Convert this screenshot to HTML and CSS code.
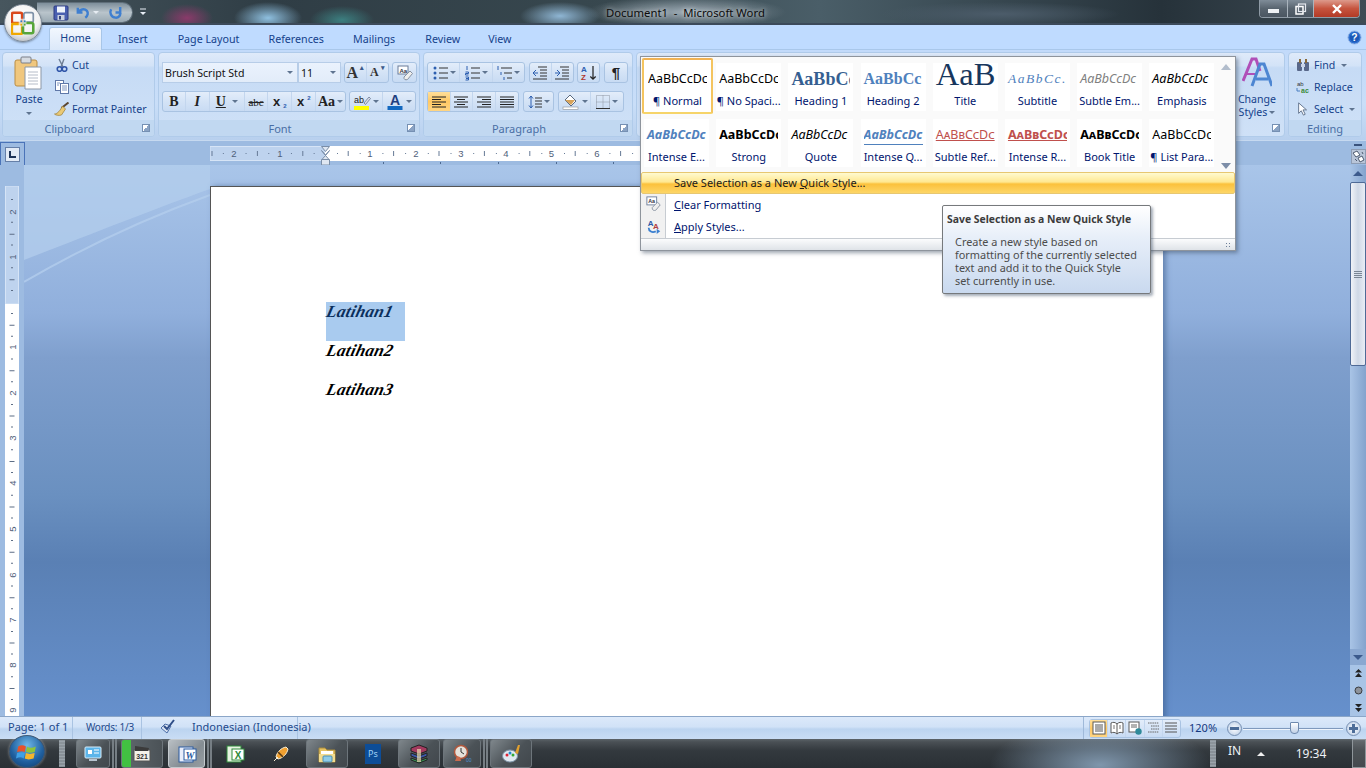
FILE: index.html
```html
<!DOCTYPE html>
<html lang="en">
<head>
<meta charset="utf-8">
<title>Document1 - Microsoft Word</title>
<link rel="stylesheet" href="styles.css">
</head>
<body>
<div class="app">
  <header class="titlebar">
    <div class="qat">
      <svg class="ic16" viewBox="0 0 16 16"><rect x="1" y="1" width="14" height="14" rx="1" fill="#4a5fb0" stroke="#2c3a80"/><rect x="4" y="1.500" width="8" height="6" fill="#eef3fb"/><rect x="4.500" y="10" width="7" height="5" fill="#c8cfdf"/><rect x="6" y="11" width="2" height="3.500" fill="#35457f"/></svg>
      <svg class="ic-undo" viewBox="0 0 16 16"><path d="M3 3v5h5M3.500 8C5 4.500 10 3.500 12.500 6c2 2.200 1.200 5.500-1.500 7.500" fill="none" stroke="#3f7fd0" stroke-width="2.600"/></svg>
      <span class="drop drop-q"></span>
      <svg class="ic-redo" viewBox="0 0 16 16"><path d="M13 2v6H8M3.300 4.500C1.500 8 3 13 8 13.500c3 .2 5-2 5.300-5" fill="none" stroke="#3f7fd0" stroke-width="2.600"/></svg>
    </div>
    <svg class="qat-more" viewBox="0 0 8 8"><path d="M1 1h6" stroke="#e8eef6"/><path d="M1 4h6L4 7z" fill="#e8eef6"/></svg>
    <div class="doc-title">Document1  -  Microsoft Word</div>
    <div class="winbtns">
      <div class="wb wb-min"><span class="min-glyph"></span></div>
      <div class="wb wb-max"><svg viewBox="0 0 12 12" width="12" height="12"><rect x="1" y="3.500" width="7" height="7.500" fill="none" stroke="#fff" stroke-width="1.500"/><rect x="3.500" y="1" width="7" height="7.500" fill="none" stroke="#e4e8ee" stroke-width="1.200"/></svg></div>
      <div class="wb wb-close"><svg viewBox="0 0 12 10" width="12" height="10"><path d="M2 1l8 8M10 1L2 9" stroke="#fff" stroke-width="2.400"/></svg></div>
    </div>
  </header>

  <nav class="tabs">
    <span class="tab tab-active">Home</span>
    <span class="tab t-insert">Insert</span>
    <span class="tab t-layout">Page Layout</span>
    <span class="tab t-refs">References</span>
    <span class="tab t-mail">Mailings</span>
    <span class="tab t-review">Review</span>
    <span class="tab t-view">View</span>
    <svg class="help" viewBox="0 0 16 16"><circle cx="8" cy="8" r="7" fill="#2d6fd0" stroke="#9ab9e6"/><circle cx="8" cy="8" r="5" fill="#1c58b6"/><text x="8" y="11.500" class="help-q">?</text></svg>
  </nav>

  <section class="ribbon">
    <div class="group g-clip">
      <div class="gbody clip-body">
        <div class="paste">
          <svg class="paste-ic" viewBox="0 0 28 34"><rect x="1" y="4" width="22" height="26" rx="2" fill="#f0c77e" stroke="#b98d45"/><rect x="7" y="1" width="10" height="6" rx="1" fill="#d6dbe2" stroke="#7a7f88"/><path d="M11 11h16v22H11z" fill="#fff" stroke="#8c97a6"/><path d="M14 16h10M14 19h10M14 22h10M14 25h10M14 28h10" stroke="#b5bcc8"/></svg>
          <span class="paste-t">Paste</span>
          <span class="drop"></span>
        </div>
        <div class="clip-list">
          <div class="clip-row"><svg class="ic14" viewBox="0 0 14 14"><path d="M4 1l4 8M9 1L6 9" stroke="#6f7f95" stroke-width="1.400" fill="none"/><circle cx="4.500" cy="11" r="2.300" fill="none" stroke="#3055a8" stroke-width="1.600"/><circle cx="9.500" cy="11" r="2.300" fill="none" stroke="#3055a8" stroke-width="1.600"/></svg><span>Cut</span></div>
          <div class="clip-row"><svg class="ic14" viewBox="0 0 14 14"><rect x=".5" y=".5" width="8" height="10" fill="#fff" stroke="#5f78a8"/><rect x="5.500" y="3.500" width="8" height="10" fill="#fff" stroke="#5f78a8"/><path d="M7 6h5M7 8h5M7 10h5M2 3h3M2 5h2" stroke="#7f96c0"/></svg><span>Copy</span></div>
          <div class="clip-row"><svg class="ic16b" viewBox="0 0 16 14"><path d="M15 .5L8 6" stroke="#5b4630" stroke-width="2"/><path d="M9 4l3 3-4 6c-3 1-6 0-7-1 3 0 6-4 8-8z" fill="#eac976" stroke="#9a7c36" stroke-width=".7"/></svg><span>Format Painter</span></div>
        </div>
      </div>
      <div class="glabel"><span>Clipboard</span><i class="launch"></i></div>
    </div>

    <div class="group g-font">
      <div class="gbody font-body">
        <div class="row">
          <div class="combo c-name"><span>Brush Script Std</span><span class="drop"></span></div>
          <div class="combo c-size"><span>11</span><span class="drop"></span></div>
          <div class="bgroup bg-grow">
            <span class="btn w22 big-a">A<sup>▴</sup></span>
            <span class="btn w22 small-a">A<sup>▾</sup></span>
          </div>
          <div class="bgroup bg-clear"><svg class="ic16" viewBox="0 0 16 16"><rect x="1" y="1" width="10" height="8" fill="#fff" stroke="#6b7c99"/><text x="2.500" y="7.500" class="mini">Aa</text><path d="M7 12l6-6 2.500 2.500-5 6c-2 .8-4 0-3.500-2.500z" fill="#eee" stroke="#8690a0"/></svg></div>
        </div>
        <div class="row row2">
          <div class="bgroup bg-format">
            <span class="btn w23 f-b">B</span>
            <span class="btn w24 f-i">I</span>
            <span class="btn w35 f-u"><u>U</u><span class="drop"></span></span>
            <span class="btn w24 f-s">abc</span>
            <span class="btn w24 f-x">x<sub>2</sub></span>
            <span class="btn w24 f-x">x<sup>2</sup></span>
            <span class="btn w29 f-aa">Aa<span class="drop"></span></span>
          </div>
          <div class="bgroup bg-color">
            <span class="btn w33"><svg class="ic18" viewBox="0 0 18 16"><rect x="1" y="12" width="15" height="4" fill="#ffff00"/><text x="1" y="9" class="ab">ab</text><path d="M11 9l5-6 1.500 1.500-5 6z" fill="#d8dde8" stroke="#687690" stroke-width=".8"/></svg><span class="drop"></span></span>
            <span class="btn w33"><svg class="ic18" viewBox="0 0 18 16"><text x="9" y="11" class="colA">A</text><rect x="1.500" y="12" width="15" height="4" fill="#1268c0"/></svg><span class="drop"></span></span>
          </div>
        </div>
      </div>
      <div class="glabel"><span>Font</span><i class="launch"></i></div>
    </div>

    <div class="group g-para">
      <div class="gbody para-body">
        <div class="row">
          <div class="bgroup bg-lists">
            <span class="btn w33"><svg class="ic16" viewBox="0 0 16 16"><path d="M7 3h9M7 8h9M7 13h9" stroke="#333"/><circle cx="3" cy="3" r="1.500" fill="#2d5fb0"/><circle cx="3" cy="8" r="1.500" fill="#2d5fb0"/><circle cx="3" cy="13" r="1.500" fill="#2d5fb0"/></svg><span class="drop"></span></span>
            <span class="btn w33"><svg class="ic16" viewBox="0 0 16 16"><path d="M7 3h9M7 8h9M7 13h9" stroke="#333"/><path d="M3 1v4M1.500 7h3v1.500h-3V10h3M1.500 12h3v3h-3M2 13.500h2" stroke="#2d5fb0" fill="none"/></svg><span class="drop"></span></span>
            <span class="btn w32"><svg class="ic16" viewBox="0 0 16 16"><path d="M5 3h11M8 8h8M11 13h5" stroke="#333"/><path d="M2 1v4M5 7v3M8 12v3" stroke="#2d5fb0"/></svg><span class="drop"></span></span>
          </div>
          <div class="bgroup bg-ind">
            <span class="btn w22"><svg class="ic14" viewBox="0 0 14 14"><path d="M5 1h9M7 4h7M7 7h7M7 10h7M0 13h14" stroke="#333"/><path d="M5 7H0l3-3M0 7l3 3" stroke="#2d5fb0" fill="none"/></svg></span>
            <span class="btn w22"><svg class="ic14" viewBox="0 0 14 14"><path d="M5 1h9M7 4h7M7 7h7M7 10h7M0 13h14" stroke="#333"/><path d="M0 7h5L2 4M5 7l-3 3" stroke="#2d5fb0" fill="none"/></svg></span>
          </div>
          <div class="bgroup bg-sort"><svg class="ic18" viewBox="0 0 18 18"><text x="0" y="8" class="az-a">A</text><text x="0" y="17" class="az-z">Z</text><path d="M13.500 1v15M10.500 13l3 3 3-3" stroke="#222" stroke-width="1.400" fill="none"/></svg></div>
          <div class="bgroup bg-pil"><span class="pil">¶</span></div>
        </div>
        <div class="row row2">
          <div class="bgroup bg-align">
            <span class="btn w23 on"><svg class="ic14" viewBox="0 0 14 12"><path d="M0 1h14M0 3.500h9M0 6h14M0 8.500h9M0 11h14" stroke="#222"/></svg></span>
            <span class="btn w23"><svg class="ic14" viewBox="0 0 14 12"><path d="M0 1h14M3 3.500h8M0 6h14M3 8.500h8M0 11h14" stroke="#222"/></svg></span>
            <span class="btn w23"><svg class="ic14" viewBox="0 0 14 12"><path d="M0 1h14M5 3.500h9M0 6h14M5 8.500h9M0 11h14" stroke="#222"/></svg></span>
            <span class="btn w23"><svg class="ic14" viewBox="0 0 14 12"><path d="M0 1h14M0 3.500h14M0 6h14M0 8.500h14M0 11h14" stroke="#222"/></svg></span>
          </div>
          <div class="bgroup bg-space"><svg class="ic14" viewBox="0 0 14 14"><path d="M3 1v12M1 3.500L3 1l2 2.500M1 10.500L3 13l2-2.500" stroke="#2d5fb0" fill="none"/><path d="M7 3h7M7 6h7M7 9h7M7 12h7" stroke="#333"/></svg><span class="drop"></span></div>
          <div class="bgroup bg-shade">
            <span class="btn w33"><svg class="ic18" viewBox="0 0 18 16"><path d="M8 1l6 6-5 5-6-6z" fill="#fff" stroke="#5a6a80"/><path d="M3 6h10l-4 5z" fill="#d7a35a"/><rect x="1" y="13" width="15" height="2.500" fill="#fff" stroke="#8b8f95" stroke-width=".6"/></svg><span class="drop"></span></span>
            <span class="btn w33"><svg class="ic14" viewBox="0 0 14 14"><path d="M.5.500h13v13H.5zM7 .5v13M.5 7h13" fill="none" stroke="#8c95a3" stroke-dasharray="1 1"/><path d="M0 13.500h14" stroke="#333"/></svg><span class="drop"></span></span>
          </div>
        </div>
      </div>
      <div class="glabel"><span>Paragraph</span><i class="launch"></i></div>
    </div>

    <div class="group g-styles">
      <div class="gbody styles-body">
        <div class="change">
          <svg class="change-ic" viewBox="0 0 30 30"><path d="M1 24L10 2h4l4 12" fill="none" stroke="#b04fb8" stroke-width="3"/><path d="M5 17h9" stroke="#b04fb8" stroke-width="2"/><path d="M10 29L18 7h4l8 22M14 22h12" fill="none" stroke="#4d86d2" stroke-width="3"/></svg>
          <span>Change</span>
          <span class="ch2">Styles<span class="drop"></span></span>
        </div>
      </div>
      <div class="glabel glabel-r"><i class="launch"></i></div>
    </div>

    <div class="group g-edit">
      <div class="gbody clip-list edit-body">
        <div class="clip-row"><svg class="ic14" viewBox="0 0 14 14"><rect x="1" y="4" width="5" height="9" rx="1" fill="#59688a"/><rect x="8" y="4" width="5" height="9" rx="1" fill="#59688a"/><rect x="3" y="1" width="2" height="4" fill="#8a6a3a"/><rect x="9" y="1" width="2" height="4" fill="#8a6a3a"/><rect x="5" y="6" width="4" height="3" fill="#c9d3e6"/></svg><span>Find</span><span class="drop"></span></div>
        <div class="clip-row"><svg class="ic14" viewBox="0 0 14 14"><text x="1" y="6" class="mini2">ab</text><text x="5" y="13" class="mini3">ac</text><path d="M1 8v3h3" stroke="#4b7fc0" fill="none"/></svg><span>Replace</span></div>
        <div class="clip-row"><svg class="ic14" viewBox="0 0 14 16"><path d="M2 1v12l3-3 2.500 5 2-1-2.500-5h4z" fill="#fff" stroke="#596a85"/></svg><span>Select</span><span class="drop"></span></div>
      </div>
      <div class="glabel"><span>Editing</span></div>
    </div>
  </section>

  <div class="rulerbar">
    <div class="tabsel"><div class="tabsel-in"><svg viewBox="0 0 9 9" width="9" height="9"><path d="M2 1v6h6" fill="none" stroke="#1e3458" stroke-width="2"/></svg></div></div>
    <svg class="hruler" viewBox="0 0 450 19" width="450" height="19">
      <rect x="0" y=".5" width="115" height="14" fill="#bed3ee" stroke="#d6e4f6"/>
      <rect x="115" y="0" width="335" height="15" fill="#fff"/>
      <line x1="12.850" y1="7.500" x2="115" y2="7.500" stroke="#667a96" stroke-dasharray="1 21.700"/>
      <line x1="127" y1="7.500" x2="450" y2="7.500" stroke="#667a96" stroke-dasharray="1 21.700"/>
      <line x1="137.700" y1="7.500" x2="450" y2="7.500" stroke="#667a96" stroke-width="5" stroke-dasharray="1 44.400"/>
      <line x1="1.500" y1="7.500" x2="115" y2="7.500" stroke="#667a96" stroke-width="5" stroke-dasharray="1 44.400"/>
      <text x="24" y="11" class="rn">2</text><text x="70" y="11" class="rn">1</text>
      <text x="160" y="11" class="rn">1</text><text x="206" y="11" class="rn">2</text><text x="251" y="11" class="rn">3</text><text x="296" y="11" class="rn">4</text><text x="341.500" y="11" class="rn">5</text><text x="387" y="11" class="rn">6</text>
      <path d="M173.500 16v2M230.500 16v2M288.500 16v2M346.500 16v2M403.500 16v2" stroke="#4d6a92"/>
      <path d="M111.500 4.500l4 4.500 4-4.500v0l-4 5 4 4.500v5h-8v-5l4-4.500z" fill="#dfe7f2" stroke="#7a8ea8"/>
      <path d="M111.500 .5h8l-4 5z" fill="#dfe7f2" stroke="#7a8ea8"/>
      <path d="M111.500 13.500h8" stroke="#7a8ea8"/>
    </svg>
    <div class="split">
      <span class="split-dash"></span>
      <span class="split-ic"><svg viewBox="0 0 13 13" width="13" height="13"><path d="M1 3l4-2 3 4-4 2zM6 8l4-2 2 4-4 2z" fill="#fff" stroke="#4e5b70"/><path d="M3 9l2 2M10 2l1 2" stroke="#4e5b70"/></svg></span>
    </div>
  </div>

  <main class="workspace">
    <div class="vpanel">
      <svg class="vruler" viewBox="0 0 14 530" width="14" height="530">
        <rect x=".5" y="0" width="13" height="118" fill="#bed3ee" stroke="#d6e4f6"/>
        <rect x="0" y="118" width="14" height="412" fill="#fff"/>
        <line x1="7" y1="13.100" x2="7" y2="118" stroke="#5d6e86" stroke-width="2" stroke-dasharray="1 21.700"/>
        <line x1="7" y1="127.100" x2="7" y2="530" stroke="#5d6e86" stroke-width="2" stroke-dasharray="1 21.700"/>
        <line x1="7" y1="47.800" x2="7" y2="118" stroke="#5d6e86" stroke-width="5" stroke-dasharray="1 44.400"/>
        <line x1="7" y1="138.800" x2="7" y2="530" stroke="#5d6e86" stroke-width="5" stroke-dasharray="1 44.400"/>
        <g class="vnums">
          <text transform="translate(11 26) rotate(-90)" class="rn">2</text>
          <text transform="translate(11 71) rotate(-90)" class="rn">1</text>
          <text transform="translate(11 161) rotate(-90)" class="rn">1</text>
          <text transform="translate(11 207) rotate(-90)" class="rn">2</text>
          <text transform="translate(11 252) rotate(-90)" class="rn">3</text>
          <text transform="translate(11 297) rotate(-90)" class="rn">4</text>
          <text transform="translate(11 343) rotate(-90)" class="rn">5</text>
          <text transform="translate(11 389) rotate(-90)" class="rn">6</text>
          <text transform="translate(11 434) rotate(-90)" class="rn">7</text>
          <text transform="translate(11 479) rotate(-90)" class="rn">8</text>
          <text transform="translate(11 524) rotate(-90)" class="rn">9</text>
        </g>
      </svg>
    </div>
    <div class="docarea">
      <svg class="swoosh" viewBox="0 0 1326 551" preserveAspectRatio="none"><path d="M0 95C60 72 130 44 186 24L186 0H1326V0H0z" fill="#b3cdec" opacity=".75"/><path d="M0 117C60 82 125 52 186 30" fill="none" stroke="#b3cdec" stroke-width="2" opacity=".8"/></svg>
      <div class="page">
        <p class="line sel"><span>Latihan1</span></p>
        <p class="line"><span>Latihan2</span></p>
        <p class="line"><span>Latihan3</span></p>
      </div>
    </div>
    <div class="vscroll">
      <div class="sb-top"><span class="sb-up"></span></div>
      <div class="sb-thumb"><span class="sb-grip"></span></div>
      <div class="sb-track"></div>
      <div class="sb-btn"><span class="sb-down"></span></div>
      <div class="sb-nav">
        <svg viewBox="0 0 9 9" width="9" height="9"><path d="M4.500 0L8 3.500H1zM4.500 4L8 8H1z" fill="#222"/></svg>
        <svg viewBox="0 0 9 9" width="9" height="9"><circle cx="4.500" cy="4.500" r="3.500" fill="#8e939b" stroke="#222" stroke-width=".8"/></svg>
        <svg viewBox="0 0 9 9" width="9" height="9"><path d="M1 1h7L4.500 4.500zM1 5h7L4.500 9z" fill="#222"/></svg>
      </div>
    </div>
  </main>

  <footer class="status">
    <span class="st st-page">Page: 1 of 1</span>
    <span class="st st-words">Words: 1/3</span>
    <span class="st st-lang"><svg class="ic-check" viewBox="0 0 18 16"><path d="M2 9l4-4 6 2-4 7z" fill="#dbe5f3" stroke="#4d6fa8"/><path d="M5 7l3 3 7-9" fill="none" stroke="#2f4e88" stroke-width="2"/></svg><span>Indonesian (Indonesia)</span></span>
    <span class="st-spring"></span>
    <div class="views">
      <span class="vbtn on"><svg class="ic14" viewBox="0 0 14 14"><rect x="1" y="1" width="12" height="12" fill="#fff" stroke="#5a5a5a"/><path d="M3 4h8M3 6h8M3 8h8M3 10h8" stroke="#555"/></svg></span>
      <span class="vbtn"><svg class="ic14" viewBox="0 0 14 14"><path d="M7 3C5 1 3 1 1 2v10c2-1 4-1 6 1 2-2 4-2 6-1V2c-2-1-4-1-6 1zM7 3v10" fill="#fff" stroke="#5a5a5a"/><path d="M3 5h2M3 7h2M9 5h2M9 7h2" stroke="#777"/></svg></span>
      <span class="vbtn"><svg class="ic14" viewBox="0 0 14 14"><rect x="1" y="1" width="10" height="10" fill="#fff" stroke="#5a5a5a"/><path d="M3 4h6M3 6h6" stroke="#666"/><circle cx="10.500" cy="10.500" r="3.200" fill="#2f8a9a"/></svg></span>
      <span class="vbtn"><svg class="ic14" viewBox="0 0 14 14"><path d="M2 2h11M5 5h8M5 8h8M2 11h11" stroke="#666" stroke-dasharray="1.500 .7"/></svg></span>
      <span class="vbtn"><svg class="ic14" viewBox="0 0 14 14"><path d="M1 2h12M1 5h12M1 8h12M1 11h12" stroke="#555"/></svg></span>
    </div>
    <span class="zoompct">120%</span>
    <span class="zbtn"><i class="zminus"></i></span>
    <div class="zslider"><span class="zthumb"></span></div>
    <span class="zbtn"><i class="zminus"></i><i class="zplus"></i></span>
  </footer>

  <div class="taskbar">
    <span class="grip g-start"></span>
    <div class="tb tb-f w34"><svg class="tic" viewBox="0 0 20 20"><rect x="2" y="3" width="16" height="11" rx="1" fill="#5cb5ea" stroke="#d8ecf8"/><rect x="5" y="6" width="4" height="4" fill="#fff"/><path d="M11 6h5M11 9h5" stroke="#fff"/><rect x="6" y="15" width="8" height="2" fill="#b8c4d0"/></svg></div>
    <span class="tb-sep"></span>
    <div class="tb tb-f w42 prog"><svg class="tic" viewBox="0 0 20 20"><rect x="2" y="6" width="16" height="11" fill="#f4f2ea" stroke="#555"/><path d="M3 2l14 2-1 3H3z" fill="#3b3b3b"/><text x="10" y="15" class="num321">321</text></svg></div>
    <div class="tb tb-a w37"><svg class="tic" viewBox="0 0 20 20"><rect x="2" y="3" width="14" height="15" fill="#e9eefb" stroke="#2a5a9f"/><rect x="7" y="5" width="12" height="11" fill="#fff" stroke="#2a5a9f"/><text x="13" y="14.500" class="w-let">W</text></svg></div>
    <span class="tb-sep"></span>
    <div class="tb tb-p w30 m-excel"><svg class="tic" viewBox="0 0 20 20"><rect x="2" y="2" width="14" height="16" fill="#e7f3e2" stroke="#2f8a3a"/><rect x="7" y="5" width="12" height="11" fill="#fff" stroke="#2f8a3a"/><text x="13" y="14.500" class="x-let">X</text></svg></div>
    <div class="tb tb-p w30 m-rock"><svg class="tic" viewBox="0 0 20 20"><path d="M3 17l4-4M15 3c-5 1-9 5-10 10l2 2c5-1 9-5 10-10z" fill="#f0a030" stroke="#f7f0d8"/><path d="M7 8l5 5" stroke="#5b3a10" stroke-width="1.600"/></svg></div>
    <div class="tb tb-f w42 m-fold"><svg class="tic" viewBox="0 0 20 20"><path d="M2 4h6l2 2h8v12H2z" fill="#e6c262" stroke="#a88a3a"/><rect x="4" y="7" width="12" height="4" fill="#fff"/><path d="M2 10h16v8H2z" fill="#f3dc8f"/><rect x="6" y="12" width="9" height="6" rx="1" fill="#8ecbe8" stroke="#4d8fb0"/></svg></div>
    <div class="tb tb-p w30 m-ps"><div class="ps">Ps</div></div>
    <div class="tb tb-f w42 m-rar"><svg class="tic" viewBox="0 0 20 20"><path d="M2 4l8-3 8 3v3l-8 3-8-3z" fill="#a33a5f" stroke="#222"/><path d="M2 9l8 3 8-3v3l-8 3-8-3z" fill="#3d58a8" stroke="#222"/><path d="M2 14l8 3 8-3v2l-8 3-8-3z" fill="#3a9a57" stroke="#222"/><rect x="8" y="5" width="4" height="13" fill="#e8dcb0" opacity=".7"/></svg></div>
    <div class="tb tb-f w38"><svg class="tic" viewBox="0 0 20 20"><circle cx="9" cy="8" r="6.500" fill="#e5e1da" stroke="#b0573c" stroke-width="1.500"/><path d="M9 4v4l3 2" stroke="#333" fill="none"/><path d="M5 12l-2 5h6l-1-4z" fill="#c96a4d"/><text x="14" y="18" class="tb-blue">00</text></svg></div>
    <span class="tb-sep s3"></span>
    <div class="tb tb-f w42"><svg class="tic" viewBox="0 0 20 20"><ellipse cx="9" cy="12" rx="7.500" ry="6" fill="#dfe8f0" stroke="#7f95a8"/><circle cx="6" cy="11" r="1.500" fill="#d23"/><circle cx="9" cy="9" r="1.500" fill="#28c"/><circle cx="12" cy="11" r="1.500" fill="#3a3"/><path d="M14 9l3-8h2l-2 9z" fill="#e0a030"/></svg></div>
    <span class="tb-spring"></span>
    <span class="grip g-tray"></span>
    <span class="lang">IN</span>
    <span class="tray-up"></span>
    <span class="clock">19:34</span>
    <span class="showdesk"></span>
  </div>
</div>

<div class="orb">
  <svg viewBox="0 0 28 28" class="orb-logo"><rect x="1" y="2" width="12" height="12" rx="2" fill="none" stroke="#d9481c" stroke-width="3"/><rect x="15" y="2" width="11" height="11" rx="2" fill="none" stroke="#7f92a8" stroke-width="2"/><rect x="1" y="15" width="12" height="12" rx="2" fill="none" stroke="#f0a800" stroke-width="3"/><rect x="14" y="14" width="12" height="12" rx="2" fill="none" stroke="#57a63a" stroke-width="3"/><rect x="9" y="9" width="9" height="9" fill="#f4f4f4" opacity=".7"/><rect x="11" y="11" width="2" height="2" fill="#2d7fc0"/><rect x="15" y="11" width="2" height="2" fill="#2d7fc0"/><rect x="11" y="15" width="2" height="2" fill="#f0a800"/><rect x="15" y="15" width="2" height="2" fill="#57a63a"/></svg>
</div>

<div class="gallery">
  <div class="g-top">
    <div class="g-grid">
      <div class="st-cell cur"><div class="samp s-n">AaBbCcDc</div><div class="cap">¶ Normal</div></div>
      <div class="st-cell"><div class="samp s-n">AaBbCcDc</div><div class="cap">¶ No Spaci...</div></div>
      <div class="st-cell"><div class="samp s-h1">AaBbCc</div><div class="cap">Heading 1</div></div>
      <div class="st-cell"><div class="samp s-h2">AaBbCc</div><div class="cap">Heading 2</div></div>
      <div class="st-cell"><div class="samp s-title">AaB</div><div class="cap">Title</div></div>
      <div class="st-cell"><div class="samp s-sub">AaBbCc.</div><div class="cap">Subtitle</div></div>
      <div class="st-cell"><div class="samp s-se">AaBbCcDc</div><div class="cap">Subtle Em...</div></div>
      <div class="st-cell"><div class="samp s-em">AaBbCcDc</div><div class="cap">Emphasis</div></div>
      <div class="st-cell"><div class="samp s-ie">AaBbCcDc</div><div class="cap">Intense E...</div></div>
      <div class="st-cell"><div class="samp s-strong">AaBbCcDc</div><div class="cap">Strong</div></div>
      <div class="st-cell"><div class="samp s-em">AaBbCcDc</div><div class="cap">Quote</div></div>
      <div class="st-cell"><div class="samp s-iq">AaBbCcDc</div><div class="cap">Intense Q...</div></div>
      <div class="st-cell"><div class="samp s-sr">AaBbCcDc</div><div class="cap">Subtle Ref...</div></div>
      <div class="st-cell"><div class="samp s-ir">AaBbCcDc</div><div class="cap">Intense R...</div></div>
      <div class="st-cell"><div class="samp s-bt">AaBbCcDc</div><div class="cap">Book Title</div></div>
      <div class="st-cell"><div class="samp s-n">AaBbCcDc</div><div class="cap">¶ List Para...</div></div>
    </div>
    <div class="g-scroll"><span class="g-up"></span><span class="g-down"></span></div>
  </div>
  <div class="g-save">Save Selection as a New <u>Q</u>uick Style...</div>
  <div class="g-items">
    <div class="g-item"><span class="g-ic"><svg class="ic18" viewBox="0 0 18 18"><rect x="1" y="1" width="11" height="9" fill="#fff" stroke="#6b7c99"/><text x="2.500" y="8" class="mini">Aa</text><path d="M7 13l6-6 3 3-5 6c-2 .8-4.500 0-4-3z" fill="#eee" stroke="#8690a0"/></svg></span><span class="g-t"><u>C</u>lear Formatting</span></div>
    <div class="g-item"><span class="g-ic"><svg class="ic18" viewBox="0 0 18 18"><text x="2" y="9" class="ap-a">A</text><text x="8" y="12" class="ap-b">A</text><path d="M3 11c0 4 4 6 8 4" fill="none" stroke="#3a7fd0" stroke-width="2"/><path d="M12 12l4 3-4 3z" fill="#3a7fd0"/></svg></span><span class="g-t"><u>A</u>pply Styles...</span></div>
  </div>
  <div class="g-foot"><span class="g-grip"></span></div>
</div>

<aside class="tooltip">
  <div class="tt-h">Save Selection as a New Quick Style</div>
  <p class="tt-b">Create a new style based on<br>formatting of the currently selected<br>text and add it to the Quick Style<br>set currently in use.</p>
</aside>

<div class="startorb"><svg viewBox="0 0 20 20" width="22" height="22"><path d="M2 5c2-1.500 5-1.500 7 0l-1 5C6 9 4 9 1 10z" fill="#e8512a"/><path d="M10 5c2 1.500 5 1.500 8 0l-1 5c-3 1-5 1-8 0z" fill="#8fc43a"/><path d="M1 11c3-1 5-1 7 0l-1 5c-2-1.500-4-1.500-7 0z" fill="#3fa0e6"/><path d="M9 11c2 1 5 1 8 0l-1 5c-3 1-6 1-8 0z" fill="#f6b62c"/></svg></div>
</body>
</html>
```

FILE: styles.css
```css
* { box-sizing: border-box; }
html, body { margin: 0; padding: 0; width: 1366px; height: 768px; overflow: hidden; }
body { position: relative; font: 11px "Noto Sans", sans-serif; color: #15428b; background: #9ebbe0; }
svg { display: block; flex: none; }
p { margin: 0; }

.app { display: flex; flex-direction: column; width: 1366px; height: 768px; }

/* title bar */
.titlebar {
  height: 25px; display: flex; align-items: flex-start; flex: none;
  border-bottom: 2px solid #3c4a5a;
  background:
    radial-gradient(ellipse 26px 14px at 187px 18px, #8a3a6a 0, #8a3a6a00 100%),
    radial-gradient(ellipse 34px 16px at 268px 18px, #8fc0e0 0, #8fc0e000 100%),
    radial-gradient(ellipse 32px 14px at 342px 20px, #3c7f80 0, #3c7f8000 100%),
    radial-gradient(ellipse 40px 14px at 560px 16px, #8fb6d4 0, #8fb6d400 100%),
    radial-gradient(ellipse 100px 16px at 686px 12px, #9aa8b2 0, #9aa8b200 100%),
    radial-gradient(ellipse 120px 12px at 1000px 14px, #4c5c6a 0, #4c5c6a00 100%),
    linear-gradient(90deg, #47565e 0, #2f3d45 20%, #38484f 45%, #4a5e68 60%, #26323a 85%, #3f4c55 100%);
}
.qat {
  margin: 2px 0 0 37px; width: 96px; height: 21px; display: flex; align-items: center; padding-left: 16px;
  background: linear-gradient(#7d8e9a, #b9c4cb 50%, #9aa9b3);
  border: 1px solid #5f6e79; border-radius: 0 11px 11px 0; border-left: 0;
}
.ic16 { width: 16px; height: 16px; }
.ic14 { width: 14px; height: 14px; }
.ic18 { width: 18px; height: 16px; }
.ic16b { width: 17px; height: 14px; }
.ic-undo { width: 15px; height: 15px; margin-left: 6px; }
.ic-redo { width: 15px; height: 15px; margin-left: 9px; }
.qat-more { width: 8px; height: 8px; margin: 8px 0 0 6px; }
.doc-title { margin: 5px 0 0 459px; width: 160px; font-size: 11.3px; line-height: 15px; white-space: pre; color: #0c0c0c; text-shadow: 0 0 4px #ffffffa0, 0 0 8px #ffffff70; }
.winbtns { display: flex; margin-left: 493px; height: 18px; border: 1px solid #8f9ba6; border-top: 0; border-radius: 0 0 4px 4px; overflow: hidden; }
.wb { display: flex; align-items: center; justify-content: center; background: linear-gradient(#7f8c98, #58646f 50%, #4b5661); }
.wb-min { width: 27px; }
.wb-max { width: 27px; border-left: 1px solid #aab4bd; border-right: 1px solid #aab4bd; }
.wb-close { width: 45px; background: linear-gradient(#dd9a8c, #c6543e 50%, #b33a26); }
.min-glyph { width: 11px; height: 4px; background: #eef1f4; margin-top: 4px; }

/* tabs */
.tabs { height: 24px; flex: none; display: flex; align-items: flex-end; background: #bfdbff; position: relative; }
.tab { font-size: 10.7px; line-height: 16px; padding-bottom: 2px; }
.tab-active { margin-left: 49px; width: 53px; height: 23px; display: flex; align-items: center; justify-content: center; padding: 0 0 2px; background: linear-gradient(#f2f7fe, #dbe8f9); border: 1px solid #a8c6e8; border-bottom: 0; border-radius: 3px 3px 0 0; margin-bottom: -1px; position: relative; z-index: 1; }
.t-insert { margin-left: 16px; }
.t-layout { margin-left: 30px; }
.t-refs { margin-left: 29px; }
.t-mail { margin-left: 29px; }
.t-review { margin-left: 30px; }
.t-view { margin-left: 28px; }
.help { width: 15px; height: 15px; position: absolute; right: 4px; top: 5px; }
.help-q { font: bold 11px "Liberation Sans", sans-serif; fill: #fff; text-anchor: middle; }

/* ribbon */
.ribbon { height: 91px; flex: none; display: flex; gap: 3px; padding: 2px 4px 3px 2px; background: linear-gradient(#c2dafa, #c9def8 60%, #b8d0ee); border-top: 1px solid #a9c7ea; font-size: 10.6px; }
.group { display: flex; flex-direction: column; height: 85px; border: 1px solid #b0cbea; border-radius: 4px; overflow: hidden; background: linear-gradient(#dfeafa, #d3e3f7 15%, #c6dbf5 18%, #cfe1f7 100%); }
.g-clip { width: 153px; }
.g-font { width: 262px; }
.g-para { width: 210px; }
.g-styles { width: 649px; }
.g-edit { width: 74px; }
.gbody { flex: 1; min-height: 0; }
.glabel { height: 16px; flex: none; display: flex; align-items: center; justify-content: center; position: relative; padding-right: 18px; background: #c1d8f1; color: #4a6fa5; font-size: 11px; }
.g-edit .glabel { padding-right: 0; }
.launch { position: absolute; right: 4px; top: 4px; width: 8px; height: 8px; border: 1px solid #7590b3; background: linear-gradient(135deg, #fff 50%, #8aa3c4 50%); }
.drop { display: inline-block; width: 0; height: 0; border: 3px solid transparent; border-top: 3px solid #5f7490; border-bottom: 0; flex: none; }
.drop-q { margin-left: 3px; border-top-color: #e6ecf2; }

.clip-body { display: flex; }
.paste { width: 52px; display: flex; flex-direction: column; align-items: center; padding-top: 3px; }
.paste-ic { width: 28px; height: 34px; margin-left: -2px; }
.paste-t { margin-top: 1px; line-height: 16px; }
.paste .drop { margin-top: 5px; }
.clip-list { display: flex; flex-direction: column; padding-top: 1px; }
.clip-row { height: 22px; display: flex; align-items: center; gap: 3px; white-space: nowrap; }
.clip-row .drop { margin-left: 2px; }
.clip-list .clip-row:nth-child(3) .ic16b { margin-left: -2px; margin-right: -1px; }

.row { display: flex; align-items: flex-start; gap: 3px; }
.row2 { margin-top: 8px; }
.font-body { padding: 9px 0 0 3px; }
.para-body { padding: 9px 0 0 3px; }
.combo { height: 21px; display: flex; align-items: center; justify-content: space-between; padding: 0 4px 0 2px; background: linear-gradient(#eaf2fd, #e2ecf9); border: 1px solid #b7cde8; color: #111; }
.c-name { width: 136px; margin-right: -3px; }
.c-size { width: 43px; }
.bgroup { height: 21px; display: flex; align-items: center; justify-content: center; border: 1px solid #a9c3e2; border-radius: 3px; background: linear-gradient(#e3edfa, #d4e3f6 50%, #c8dbf3); color: #222; }
.btn { height: 100%; display: flex; align-items: center; justify-content: center; gap: 2px; border-right: 1px solid #c3d6ee; font-family: "Liberation Serif", serif; }
.btn:last-child { border-right: 0; }
.w22 { width: 22px; } .w23 { width: 23px; } .w24 { width: 24px; } .w29 { width: 29px; } .w32 { width: 32px; } .w33 { width: 33px; } .w35 { width: 35px; }
.bg-grow { width: 45px; }
.bg-clear { width: 25px; }
.big-a { font: bold 16px "Liberation Serif", serif; color: #333; }
.small-a { font: bold 12px "Liberation Serif", serif; color: #333; }
.big-a sup, .small-a sup { font-size: 7px; line-height: 7px; margin-top: -9px; color: #3b5a8a; }
.bg-format { width: 184px; }
.bg-color { width: 67px; }
.f-b { font-weight: bold; font-size: 14px; }
.f-i { font-style: italic; font-weight: bold; font-size: 14px; }
.f-u { font-weight: bold; font-size: 14px; justify-content: flex-start; padding-left: 6px; gap: 6px; }
.f-s { text-decoration: line-through; font-size: 11px; }
.f-x { font-weight: bold; font-size: 13px; font-family: "Liberation Sans", sans-serif; }
.f-x sub, .f-x sup { font-size: 6px; line-height: 6px; margin-left: 1px; }
.f-x sub { color: #2d5fb0; margin-top: 8px; }
.f-x sup { color: #2d5fb0; margin-top: -7px; }
.f-aa { font-size: 14px; font-weight: bold; }
.mini { font: bold 6px "Liberation Sans", sans-serif; fill: #334; }
.mini2 { font: 6px "Liberation Sans", sans-serif; fill: #333; }
.mini3 { font: bold 7px "Liberation Sans", sans-serif; fill: #3a8a3a; }
.ab { font: 9px "Liberation Sans", sans-serif; fill: #222; }
.colA { font: bold 14px "Liberation Sans", sans-serif; fill: #1f3f80; text-anchor: middle; }
.az-a { font: bold 9px "Liberation Sans", sans-serif; fill: #2d5fb0; }
.az-z { font: bold 9px "Liberation Sans", sans-serif; fill: #b0362c; }
.bg-lists { width: 98px; }
.bg-ind { width: 45px; margin-left: 1px; }
.bg-sort { width: 23px; }
.bg-pil { width: 24px; margin-left: 1px; }
.pil { font: bold 15px "Liberation Sans", sans-serif; color: #222; }
.bg-align { width: 92px; }
.on { background: linear-gradient(#ffdf9a, #ffc864 50%, #ffd583); }
.bg-space { width: 31px; gap: 2px; margin-left: 1px; }
.bg-shade { width: 66px; margin-left: 1px; }

.styles-body { display: flex; justify-content: flex-end; }
.change { width: 50px; display: flex; flex-direction: column; align-items: center; margin-right: 2px; line-height: 13px; }
.change-ic { width: 30px; height: 30px; margin: 4px 0 6px; }
.ch2 { display: flex; align-items: center; gap: 2px; }
.glabel-r { background: transparent; }
.edit-body { padding-left: 7px; }
.edit-body .clip-row { gap: 4px; }

/* ruler */
.rulerbar { height: 25px; flex: none; background: #9dbbe1; display: flex; align-items: flex-start; border-top: 1px solid #c6d9f0; }
.tabsel { width: 25px; height: 24px; margin-top: 1px; border: 1px solid #4a73b8; padding: 4px; }
.tabsel-in { width: 15px; height: 15px; background: #e3ebf6; border: 1px solid #657fa8; display: flex; align-items: center; justify-content: center; }
.hruler { margin: 5px 0 0 185px; }
.rn { font: 9.5px "Liberation Sans", sans-serif; fill: #4f607a; text-anchor: middle; }
.split { margin-left: auto; width: 16px; display: flex; flex-direction: column; align-items: center; padding-top: 3px; }
.split-dash { width: 8px; height: 2px; background: #39527c; }
.split-ic { width: 15px; height: 15px; margin-top: 3px; background: #b9c5d8; border: 1px solid #8e9db4; display: flex; align-items: center; justify-content: center; }

/* workspace */
.workspace { height: 551px; flex: none; display: flex; }
.vpanel { width: 24px; flex: none; padding: 21px 0 0 5px; background: #9dbbe1; overflow: hidden; }
.docarea { flex: 1; position: relative; overflow: hidden; padding: 21px 0 0 186px; background: linear-gradient(#a9c5e9 0, #90afdc 27%, #7f9fcd 35%, #6a90c0 60%, #5a80b4 72%, #6690cc 100%); }
.swoosh { position: absolute; inset: 0; width: 100%; height: 100%; }
.page { position: relative; width: 953px; height: 540px; background: #fff; border: 1px solid #555; border-bottom: 0; border-right: 0; box-shadow: 3px 0 5px #3d5c8a90; padding: 115px 0 0 115px; }
.line { height: 39px; width: 79px; font: italic bold 17px "Liberation Serif", serif; color: #000; line-height: 20px; white-space: nowrap; letter-spacing: .3px; }
.line span { display: inline-block; transform: skewX(-14deg); transform-origin: 0 100%; margin-left: -2px; }
.sel { background: #a9cbef; color: #0b2f5c; }

.vscroll { width: 16px; flex: none; display: flex; flex-direction: column; background: linear-gradient(90deg, #a9c4e6, #84a3cd); }
.sb-top { height: 17px; display: flex; align-items: center; justify-content: center; }
.sb-up { border: 5px solid transparent; border-bottom: 5px solid #3c5a8c; border-top: 0; }
.sb-thumb { height: 184px; display: flex; align-items: center; justify-content: center; background: linear-gradient(90deg, #f0f3f8, #cfd8e6 50%, #e8edf5); border: 1px solid #4f6a96; border-radius: 2px; }
.sb-grip { width: 8px; height: 7px; background: repeating-linear-gradient(#7a8694 0 1px, transparent 1px 2px); }
.sb-track { flex: 1; }
.sb-btn { height: 16px; display: flex; align-items: center; justify-content: center; background: #8aa8d1; }
.sb-down { border: 5px solid transparent; border-top: 5px solid #3c5a8c; border-bottom: 0; }
.sb-nav { height: 51px; display: flex; flex-direction: column; align-items: center; justify-content: space-around; background: #a8c4e6; }

/* status */
.status { height: 23px; flex: none; display: flex; align-items: center; padding-right: 5px; border-top: 1px solid #8ba6c8; background: linear-gradient(#dce9fa, #d1e2f7 45%, #bcd4f0 55%, #c9ddf5); color: #1f4a8c; }
.st { height: 22px; display: flex; align-items: center; padding-bottom: 3px; border-right: 1px solid #a9c3e2; white-space: nowrap; }
.st-page { width: 73px; padding-left: 8px; }
.st-words { width: 69px; padding-left: 13px; font-size: 10px; letter-spacing: -.25px; }
.st-lang { width: 156px; padding-left: 17px; gap: 15px; }
.ic-check { width: 18px; height: 16px; }
.st-spring { flex: 1; height: 22px; border-right: 1px solid #9fb9d9; }
.views { margin-left: 5px; width: 92px; height: 19px; display: flex; border: 1px solid #a9c3e2; border-radius: 3px; background: linear-gradient(#e3edfa, #c8dbf3); }
.vbtn { flex: 1; display: flex; align-items: center; justify-content: center; border-right: 1px solid #c3d6ee; }
.vbtn:last-child { border-right: 0; }
.zoompct { margin-left: 8px; width: 35px; font-size: 11px; color: #14387f; padding-bottom: 2px; }
.zbtn { width: 15px; height: 15px; border: 1px solid #7790b3; border-radius: 50%; background: radial-gradient(#fff, #b4c9e4); position: relative; margin-left: 3px; flex: none; }
.zminus { position: absolute; left: 2px; top: 5px; width: 9px; height: 3px; background: #4d6d98; }
.zplus { position: absolute; left: 5px; top: 2px; width: 3px; height: 9px; background: #4d6d98; }
.zslider { width: 100px; height: 1px; margin-left: 1px; background: #7f99bd; box-shadow: 0 1px 0 #eef4fc; position: relative; }
.zthumb { position: absolute; left: 47px; top: -6px; width: 9px; height: 12px; background: linear-gradient(#fff, #c1d1e6); border: 1px solid #6f8aae; border-radius: 1px 1px 4px 4px; }

/* taskbar */
.taskbar { height: 29px; flex: none; display: flex; align-items: stretch; padding-left: 59px; color: #eef2f6;
  background:
    radial-gradient(ellipse 110px 44px at 1100px 26px, #7f96ac 0, #7f96ac00 100%),
    linear-gradient(#5c6469 0, #4a5055 10%, #33393e 40%, #2a3035 100%);
}
.grip { width: 6px; margin: 1px 0; background-image: radial-gradient(#9aa3aa 0 .8px, transparent 1px); background-size: 2px 3px; flex: none; }
.g-start { margin-right: 11px; }
.tb { height: 29px; display: flex; align-items: center; justify-content: center; flex: none; margin-right: 3px; border-radius: 3px; }
.tb-f { border: 1px solid #6d757b; background: linear-gradient(135deg, #7f878c, #4b5257 55%, #41474c); }
.tb-a { border: 1px solid #c3c9cd; background: linear-gradient(135deg, #b9bfc4, #858d93 60%, #969da2); }
.tb-p { background: transparent; }
.tic { width: 20px; height: 20px; }
.w30 { width: 30px; } .w34 { width: 34px; } .w37 { width: 37px; } .w38 { width: 38px; } .w42 { width: 42px; }
.tb-sep { width: 5px; margin: 0 4px 0 -1px; border-left: 2px solid #767e84; border-right: 2px solid #767e84; flex: none; }
.s3 { margin-right: 2px; }
.prog { background: linear-gradient(90deg, #42c142 0 9px, #5b6368 9px, #4b5257 100%); margin-right: 5px; }
.m-excel { margin-left: 4px; margin-right: 16px; }
.m-rock { margin-right: 10px; }
.m-fold { margin-right: 4px; }
.m-ps { margin: 0 10px 0 6px; }
.ps { width: 16px; height: 20px; background: #0d4d97; color: #9fd0f5; font-size: 9px; display: flex; align-items: center; justify-content: center; }
.num321 { font: bold 7px "Liberation Sans", sans-serif; fill: #333; text-anchor: middle; }
.w-let { font: italic bold 10px "Liberation Serif", serif; fill: #2a5a9f; text-anchor: middle; }
.x-let { font: bold 10px "Liberation Sans", sans-serif; fill: #2f8a3a; text-anchor: middle; }
.tb-blue { font: 5px "Liberation Sans", sans-serif; fill: #4d8fd0; }
.tb-spring { flex: 1; }
.g-tray { margin-right: 12px; }
.lang { font-size: 12px; line-height: 23px; width: 29px; }
.tray-up { margin: 13px 5px 0 0; height: 0; border: 4px solid transparent; border-bottom: 4px solid #f0f0f0; border-top: 0; }
.clock { width: 82px; font-size: 12px; line-height: 30px; text-align: center; }
.showdesk { width: 14px; border: 1px solid #8f969b; background: #ffffff20; }

/* overlays */
.orb { position: absolute; left: 4px; top: 4px; width: 38px; height: 38px; border-radius: 50%; display: flex; align-items: center; justify-content: center; background: radial-gradient(circle at 50% 35%, #ffffff 0, #f2f2f2 55%, #c0c5cb 80%, #8d949c 100%); border: 1px solid #7e8a97; box-shadow: 0 1px 2px #39455280; }
.orb-logo { width: 24px; height: 24px; }

.gallery { position: absolute; left: 640px; top: 56px; width: 596px; height: 195px; background: #fff; border: 1px solid #8e949c; box-shadow: 2px 2px 4px #3a4a6080; display: flex; flex-direction: column; }
.g-top { height: 115px; display: flex; background: #fafafa; flex: none; }
.g-grid { width: 576px; display: grid; grid-template-columns: repeat(8, 72.2px); grid-template-rows: 56px 56px; padding: 1px 0 0 1px; }
.st-cell { width: 65px; height: 48px; margin: 5px 0 0 2px; padding-top: 3px; background: #fff; text-align: center; overflow: hidden; color: #00156e; }
.cur { margin: 0; width: 71px; height: 56px; border: 2px solid #f0b254; border-bottom-color: #f6d469; border-right-color: #f4c45f; border-left-color: #f4c45f; border-radius: 2px; padding: 5px 3px 0; box-shadow: inset 0 0 0 1px #fff; }
.samp { height: 26px; line-height: 26px; margin-right: 3px; white-space: nowrap; overflow: hidden; font-size: 12.5px; color: #000; text-align: left; padding-left: 3px; font-family: "Noto Sans", sans-serif; }
.cur .samp { padding-left: 0; margin: 1px 1px 0 1px; }
.cap { height: 18px; line-height: 18px; font-size: 11px; white-space: nowrap; }
.s-h1 { font: bold 18px/26px "Liberation Serif", serif; color: #365f91; }
.s-h2 { font: bold 16px/26px "Liberation Serif", serif; color: #4f81bd; }
.s-title { font: 32.5px/22px "Liberation Serif", serif; color: #17365d; height: 29px; margin-top: -3px; }
.s-sub { font: italic 13.5px/26px "Liberation Serif", serif; color: #4f81bd; letter-spacing: 1.5px; }
.s-se { font-style: italic; color: #808080; }
.s-em { font-style: italic; color: #000; }
.s-ie { font-style: italic; font-weight: bold; color: #4f81bd; }
.s-strong { font-weight: bold; color: #000; }
.s-iq { font-style: italic; font-weight: bold; color: #4f81bd; height: 23px; line-height: 26px; border-bottom: 1px solid #4f81bd; margin: 0 3px 3px 3px; padding-left: 0; }
.s-sr { font-variant: small-caps; color: #c0504d; text-decoration: underline; }
.s-ir { font-variant: small-caps; font-weight: bold; color: #c0504d; text-decoration: underline; }
.s-bt { font-variant: small-caps; font-weight: bold; color: #000; }
.g-scroll { flex: 1; display: flex; flex-direction: column; align-items: center; justify-content: space-between; padding: 7px 0 3px; background: #fafafa; }
.g-up { border: 5px solid transparent; border-bottom: 6px solid #b2bdcc; border-top: 0; }
.g-down { border: 5px solid transparent; border-top: 6px solid #7d8ea8; border-bottom: 0; }
.g-save { height: 22px; flex: none; padding-left: 32px; line-height: 20px; color: #1a1a1a; border: 1px solid #e7c771; border-radius: 2px; background: linear-gradient(#fffad0, #ffe891 45%, #fbc13c 55%, #fdd667); }
.g-items { flex: 1; background: linear-gradient(90deg, #f1f1f1 0 24px, #c7ccd2 24px 25px, #fff 25px); display: flex; flex-direction: column; }
.g-item { height: 22px; display: flex; align-items: center; padding-bottom: 2px; color: #00156e; }
.g-ic { width: 25px; display: flex; justify-content: center; margin-right: 8px; }
.g-foot { height: 12px; flex: none; background: linear-gradient(#fbfcfd, #dfe3e8); border-top: 1px solid #c7ccd2; display: flex; justify-content: flex-end; align-items: flex-end; padding: 0 4px 2px; }
.g-grip { width: 6px; height: 6px; background-image: radial-gradient(#6d7f99 0 .8px, transparent 1px); background-size: 3px 3px; }
.ap-a { font: bold 9px "Liberation Sans", sans-serif; fill: #2a58a8; }
.ap-b { font: bold 9px "Liberation Sans", sans-serif; fill: #b04040; }

.tooltip { position: absolute; left: 942px; top: 205px; width: 209px; height: 89px; padding: 6px 4px; background: linear-gradient(#fff, #e8eff9 35%, #c9d9ef); border: 1px solid #76797c; border-radius: 2px; box-shadow: 2px 2px 3px #4a5a7080; color: #4c4c4c; }
.tt-h { font-weight: bold; font-size: 10.4px; line-height: 15px; color: #3c3c3c; }
.tt-b { margin: 8px 0 0 8px; font-size: 10.9px; line-height: 13px; white-space: nowrap; }

.startorb { position: absolute; left: 9px; top: 735px; width: 36px; height: 33px; border-radius: 50%; display: flex; align-items: center; justify-content: center; background: radial-gradient(circle at 50% 30%, #6fb7e8, #1f5f9f 60%, #103a66); border: 1px solid #3e5a78; box-shadow: 0 0 3px #ffffff70; }
```
